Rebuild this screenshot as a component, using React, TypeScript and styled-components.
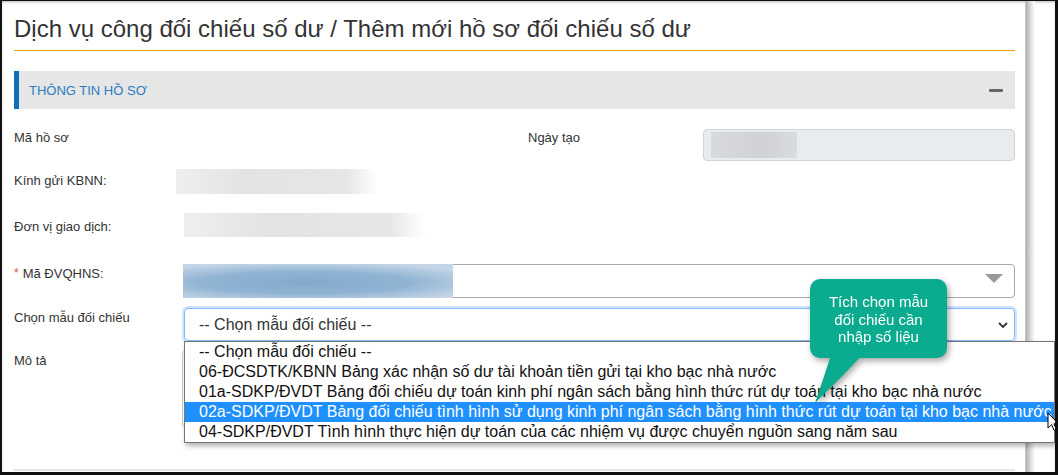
import styled, { createGlobalStyle } from 'styled-components';

const GlobalStyle = createGlobalStyle`
  html, body {
    margin: 0;
    padding: 0;
    background: #fff;
  }
  body {
    font-family: 'Liberation Sans', Arial, sans-serif;
  }
  * {
    box-sizing: border-box;
  }
`;

const Frame = styled.div`
  position: relative;
  width: 1058px;
  height: 475px;
  display: flex;
  overflow: hidden;
  background: #fff;
  border: 2px solid #111;
  border-top-width: 1px;
  border-right-width: 3px;
  border-bottom-width: 3px;
  box-shadow: inset 0 2px 3px -1px rgba(0, 0, 0, 0.3);
`;

const Main = styled.div`
  width: 1013px;
  flex-shrink: 0;
  padding-left: 12px;
`;

const Gutter = styled.div`
  flex: 1;
  padding-left: 10px;
`;

const EdgeShadow = styled.div`
  width: 10px;
  height: 100%;
  background: linear-gradient(to right, #d0d0d0 0, #b4b4b4 15%, #d8d8d8 50%, #fff 100%);
`;

const Title = styled.h1`
  margin: 14px 0 0;
  padding-bottom: 7px;
  border-bottom: 1px solid #f5a000;
  font-size: 24px;
  font-weight: 400;
  line-height: 28px;
  color: #333;
`;

const PanelHead = styled.div`
  margin-top: 20px;
  height: 38px;
  display: flex;
  align-items: center;
  justify-content: space-between;
  padding: 0 12px 0 10px;
  background: #e6e6e6;
  border-left: 5px solid #0d6fb8;
`;

const PanelTitle = styled.span`
  font-size: 13px;
  color: #2b7cc1;
  padding-top: 1px;
`;

const Minus = styled.span`
  width: 14px;
  height: 3px;
  border-radius: 1px;
  background: #666;
`;

const Row = styled.div<{ $mt: number; $h: number }>`
  display: flex;
  margin-top: ${(p) => p.$mt}px;
  height: ${(p) => p.$h}px;
`;

const Half = styled.div<{ $w?: number }>`
  display: flex;
  width: ${(p) => (p.$w ? `${p.$w}px` : 'auto')};
  flex: ${(p) => (p.$w ? 'none' : '1')};
`;

const Label = styled.div<{ $pt?: number; $w?: number }>`
  width: ${(p) => p.$w ?? 170}px;
  flex-shrink: 0;
  padding-top: ${(p) => p.$pt ?? 0}px;
  font-size: 13px;
  line-height: 18px;
  color: #333;
`;

const Required = styled.span`
  color: #d9534f;
  margin-right: 4px;
  font-size: 12px;
  vertical-align: 1px;
`;

const Control = styled.div<{ $ml?: number }>`
  position: relative;
  flex: 1;
  margin-left: ${(p) => p.$ml ?? 0}px;
`;

const Redacted = styled.div<{ $w: number; $tone: 'gray' | 'blue' }>`
  width: ${(p) => p.$w}px;
  height: 100%;
  background: ${(p) =>
    p.$tone === 'gray'
      ? 'linear-gradient(to right, #efefef 0, #e3e3e3 35%, #e6e6e6 85%, rgba(240,240,240,0) 100%)'
      : 'radial-gradient(ellipse 70% 60% at 45% 55%, #82a9cd 0, #91b4d4 55%, #c3d5e6 100%)'};
  filter: blur(0.6px);
`;

const ReadonlyInput = styled.div`
  height: 100%;
  padding: 2px 0 2px 7px;
  background: #e9ecef;
  border: 1px solid #ced4da;
  border-radius: 4px;
`;

const DateRedacted = styled.div`
  width: 86px;
  height: 100%;
  background: linear-gradient(to right, #d8dadd, #cfd1d4 60%, #d9dbde);
  filter: blur(0.5px);
`;

const Select2 = styled.div`
  height: 100%;
  display: flex;
  justify-content: space-between;
  border: 1px solid #aaa;
  border-radius: 4px;
  padding-right: 11px;
`;

const Select2Value = styled.div`
  margin: -1px 0 -1px -2px;
`;

const Triangle = styled.span`
  margin-top: 9px;
  width: 0;
  height: 0;
  border-left: 9px solid transparent;
  border-right: 9px solid transparent;
  border-top: 9px solid #999;
`;

const SelectBox = styled.div`
  height: 100%;
  display: flex;
  align-items: center;
  justify-content: space-between;
  padding: 0 6px 0 14px;
  font-size: 16px;
  color: #333;
  border: 1px solid #86b7fe;
  border-radius: 4px;
  box-shadow: 0 0 0 2px rgba(13, 110, 253, 0.2);
`;

const OptionList = styled.div`
  position: absolute;
  z-index: 2;
  top: 100%;
  left: 0;
  width: 871px;
  background: #fff;
  border: 1px solid #777;
  box-shadow: 2px 3px 5px rgba(0, 0, 0, 0.3);
`;

const Option = styled.div<{ $selected?: boolean }>`
  height: 20px;
  line-height: 20px;
  padding-left: 14px;
  font-size: 16px;
  white-space: nowrap;
  color: ${(p) => (p.$selected ? '#fff' : '#111')};
  background: ${(p) => (p.$selected ? '#1e90ff' : 'transparent')};
`;

const TextArea = styled.div`
  height: 100%;
  border: 1px solid #ccc;
  border-radius: 4px;
`;

const BottomRule = styled.div`
  margin-top: 41px;
  height: 2px;
  background: #e6e6e6;
`;

const Callout = styled.div`
  position: absolute;
  z-index: 3;
  left: 808px;
  top: 278px;
  width: 137px;
  height: 79px;
  filter: drop-shadow(2px 3px 3px rgba(0, 0, 0, 0.35));
`;

const Bubble = styled.div`
  position: relative;
  height: 100%;
  padding-top: 14px;
  background: #0bab8f;
  border-radius: 10px;
  color: #fff;
  font-size: 15px;
  line-height: 17.5px;
  text-align: center;
`;

const Tail = styled.svg`
  position: absolute;
  left: 0;
  top: 70px;
`;

const Cursor = styled.svg`
  position: absolute;
  z-index: 4;
  left: 1045px;
  top: 411px;
`;

const options = [
  '-- Chọn mẫu đối chiếu --',
  '06-ĐCSDTK/KBNN Bảng xác nhận số dư tài khoản tiền gửi tại kho bạc nhà nước',
  '01a-SDKP/ĐVDT Bảng đối chiếu dự toán kinh phí ngân sách bằng hình thức rút dự toán tại kho bạc nhà nước',
  '02a-SDKP/ĐVDT Bảng đối chiếu tình hình sử dụng kinh phí ngân sách bằng hình thức rút dự toán tại kho bạc nhà nước',
  '04-SDKP/ĐVDT Tình hình thực hiện dự toán của các nhiệm vụ được chuyển nguồn sang năm sau',
];

export default function App() {
  return (
    <>
      <GlobalStyle />
      <Frame>
        <Main>
          <Title>Dịch vụ công đối chiếu số dư / Thêm mới hồ sơ đối chiếu số dư</Title>

          <PanelHead>
            <PanelTitle>THÔNG TIN HỒ SƠ</PanelTitle>
            <Minus />
          </PanelHead>

          <Row $mt={20} $h={32}>
            <Half $w={514}>
              <Label>Mã hồ sơ</Label>
            </Half>
            <Half>
              <Label $w={175}>Ngày tạo</Label>
              <Control>
                <ReadonlyInput>
                  <DateRedacted />
                </ReadonlyInput>
              </Control>
            </Half>
          </Row>

          <Row $mt={8} $h={25}>
            <Label $pt={3} $w={162}>Kính gửi KBNN:</Label>
            <Redacted $w={201} $tone="gray" />
          </Row>

          <Row $mt={19} $h={24}>
            <Label $pt={5}>Đơn vị giao dịch:</Label>
            <Redacted $w={241} $tone="gray" />
          </Row>

          <Row $mt={27} $h={34}>
            <Label>
              <Required>*</Required>Mã ĐVQHNS:
            </Label>
            <Control>
              <Select2>
                <Select2Value>
                  <Redacted $w={270} $tone="blue" />
                </Select2Value>
                <Triangle />
              </Select2>
            </Control>
          </Row>

          <Row $mt={10} $h={33}>
            <Label $pt={1}>Chọn mẫu đối chiếu</Label>
            <Control>
              <SelectBox>
                <span>-- Chọn mẫu đối chiếu --</span>
                <svg width="10" height="6" viewBox="0 0 10 6">
                  <path d="M1 1l4 4 4-4" fill="none" stroke="#333" strokeWidth="1.8" />
                </svg>
              </SelectBox>
              <OptionList>
                {options.map((o, i) => (
                  <Option key={o} $selected={i === 3}>
                    {o}
                  </Option>
                ))}
              </OptionList>
            </Control>
          </Row>

          <Row $mt={9} $h={78}>
            <Label $pt={2}>Mô tả</Label>
            <Control $ml={-2}>
              <TextArea />
            </Control>
          </Row>

          <BottomRule />
        </Main>

        <Gutter>
          <EdgeShadow />
        </Gutter>

        <Callout>
          <Bubble>
            Tích chọn mẫu
            <br />
            đối chiếu cần
            <br />
            nhập số liệu
          </Bubble>
          <Tail width="60" height="60" viewBox="0 0 60 60">
            <path d="M23 0 L58 0 Q32 28 5 54 Q14 28 23 0 Z" fill="#0bab8f" />
          </Tail>
        </Callout>

        <Cursor width="13" height="20" viewBox="0 0 13 20">
          <path
            d="M1 1 L1 16 L4.6 12.6 L7.2 18.5 L9.4 17.5 L6.9 11.8 L11.5 11.8 Z"
            fill="#fff"
            stroke="#000"
            strokeWidth="1"
            strokeLinejoin="round"
          />
        </Cursor>
      </Frame>
    </>
  );
}
